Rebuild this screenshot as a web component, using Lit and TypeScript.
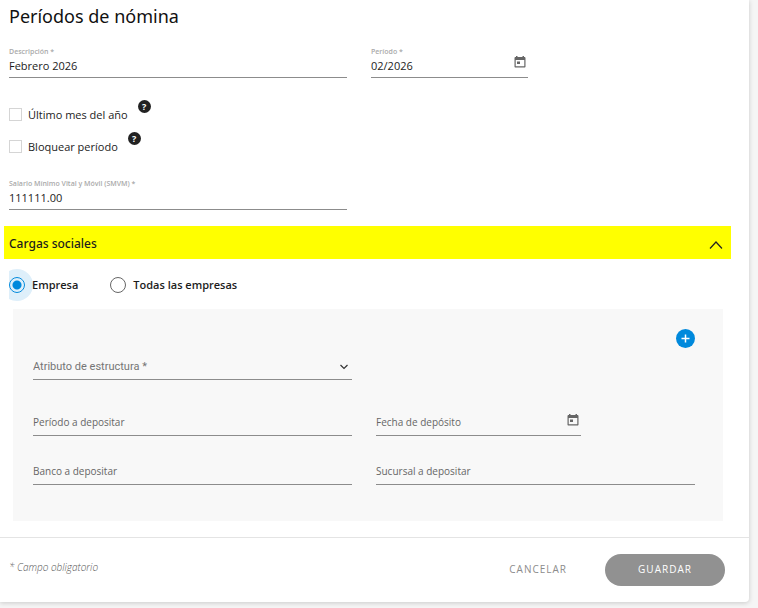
import { LitElement, html, css, svg } from "lit";
import { customElement, property, state } from "lit/decorators.js";

const calendarIcon = svg`<svg class="calendar" viewBox="0 0 12 12" width="12" height="12" aria-hidden="true">
  <path fill="#666" fill-rule="evenodd" d="M2 0h1.500v1h5V0H10v1h.5C11 1 11.500 1.500 11.500 2v8.500c0 .7-.4 1-1 1h-9c-.6 0-1-.3-1-1V2C.5 1.500 1 1 1.500 1H2zM1.700 4v6.300h8.600V4z"/>
  <rect x="3" y="5.500" width="3" height="2.500" fill="#666"/>
</svg>`;

const fieldStyles = css`
  * {
    box-sizing: border-box;
  }
  input,
  select,
  button {
    font: inherit;
    color: inherit;
    margin: 0;
    padding: 0;
    border: 0;
    background: none;
    outline: 0;
    border-radius: 0;
    min-width: 0;
  }
  .calendar {
    display: block;
  }
`;

@customElement("form-field")
export class FormField extends LitElement {
  @property() label = "";
  @property() value = "";
  @property({ type: Boolean }) date = false;

  static styles = [
    fieldStyles,
    css`
      :host {
        display: block;
        height: 32px;
        border-bottom: 1px solid #8c8c8c;
        font-size: 11px;
        color: #1c1c1c;
      }
      .box {
        display: flex;
        height: 100%;
      }
      .filled {
        flex: 1;
        min-width: 0;
        display: flex;
        flex-direction: column;
      }
      .filled span {
        font-size: 7px;
        font-weight: 600;
        line-height: 12px;
        color: #aaa;
      }
      .filled input {
        height: 15px;
        width: 100%;
      }
      .empty {
        flex: 1;
        min-width: 0;
        display: flex;
        align-items: center;
        gap: 4px;
        padding-top: 4px;
        font-size: 10px;
        color: #666;
        white-space: nowrap;
      }
      .empty input {
        flex: 1;
      }
      button {
        align-self: center;
        padding: 2px;
      }
    `,
  ];

  render() {
    return html`<div class="box">
      <label class=${this.value ? "filled" : "empty"}>
        <span>${this.label}</span><input type="text" .value=${this.value} />
      </label>
      ${this.date
        ? html`<button type="button" aria-label="Abrir calendario">${calendarIcon}</button>`
        : ""}
    </div>`;
  }
}

@customElement("app-root")
export class AppRoot extends LitElement {
  @state() private scope = "empresa";

  static styles = [
    fieldStyles,
    css`
      :host {
        display: block;
        min-height: 100vh;
        padding: 0 9px 6px 0;
        background: #f5f5f5;
        font-family: "Open Sans", "Noto Sans", sans-serif;
        font-size: 11px;
        color: #1c1c1c;
      }
      .card {
        background: #fff;
        border-radius: 0 0 4px 0;
        box-shadow: 0 1px 5px rgba(0, 0, 0, 0.18);
      }
      h1 {
        margin: 0;
        padding: 4px 9px 18px;
        font: 400 18px/24px "Noto Sans", sans-serif;
        color: #111;
      }
      .columns {
        display: grid;
        grid-template-columns: 1fr 1fr;
        column-gap: 24px;
      }
      .main {
        padding: 0 40px 0 9px;
      }
      .month {
        width: 157px;
      }
      .checks {
        padding: 20px 9px 16px;
      }
      .check {
        display: flex;
        align-items: center;
        height: 32px;
        gap: 10px;
      }
      .check label {
        display: flex;
        align-items: center;
        gap: 6px;
      }
      .check input {
        appearance: none;
        width: 13px;
        height: 13px;
        border: 1px solid #d5d5d5;
        background: #fff;
      }
      .check input:checked {
        background: #0089dc;
      }
      .help {
        width: 13px;
        height: 13px;
        margin-bottom: 15px;
        border-radius: 50%;
        background: #222;
        color: #fff;
        font-size: 9px;
        font-weight: 700;
        line-height: 13px;
        text-align: center;
      }
      .section {
        display: flex;
        align-items: center;
        justify-content: space-between;
        height: 33px;
        margin: 16px 18px 0 4px;
        padding: 2px 8px 0 5px;
        background: #ff0;
      }
      h2 {
        margin: 0;
        font: 500 12px/20px "Noto Sans", sans-serif;
      }
      .section svg,
      .select svg,
      .add svg {
        display: block;
      }
      .section button {
        padding-top: 2px;
      }
      .radios {
        display: flex;
        gap: 32px;
        height: 32px;
        margin: 10px 9px 8px;
        overflow: hidden;
        font-weight: 600;
      }
      .radios label {
        display: flex;
        align-items: center;
        gap: 7px;
      }
      .radios span {
        position: relative;
        padding-bottom: 2px;
      }
      .radios input {
        appearance: none;
        width: 16px;
        height: 16px;
        border: 1px solid #666;
        border-radius: 50%;
        background: #fff;
      }
      .radios input:checked {
        border-color: #0089dc;
        background: radial-gradient(circle, #0089dc 4px, #deeffa 5px);
        box-shadow: 0 0 0 8px #deeffa;
      }
      .panel {
        margin: 0 26px 0 13px;
        padding: 20px 28px 36px 20px;
        background: #f8f8f8;
      }
      .add {
        display: grid;
        place-items: center;
        width: 19px;
        height: 19px;
        margin-left: auto;
        border-radius: 50%;
        background: #0089dc;
      }
      .select {
        display: grid;
        align-items: center;
        height: 32px;
        border-bottom: 1px solid #8c8c8c;
        font-family: Roboto, sans-serif;
        font-size: 11px;
        color: #757575;
      }
      .select select {
        grid-area: 1 / 1;
        appearance: none;
        height: 20px;
        margin-top: 6px;
      }
      .select svg {
        grid-area: 1 / 1;
        justify-self: end;
        margin: 6px 4px 0 0;
        pointer-events: none;
      }
      .deposit {
        row-gap: 17px;
        margin-top: 24px;
      }
      .day {
        width: 205px;
      }
      footer {
        display: flex;
        align-items: center;
        height: 65px;
        margin-top: 16px;
        padding: 0 24px 0 9px;
        border-top: 1px solid #e4e4e4;
        font-size: 10px;
      }
      .note {
        flex: 1;
        margin: 0 0 6px;
        font-style: italic;
        font-weight: 300;
        color: #555;
      }
      footer button {
        height: 32px;
        padding-bottom: 2px;
        letter-spacing: 1px;
      }
      .cancel {
        margin-right: 38px;
        color: #8c8c8c;
      }
      .save {
        width: 120px;
        border-radius: 16px;
        background: #919191;
        color: #fff;
        font-weight: 500;
      }
    `,
  ];

  private radio(value: string, text: string) {
    return html`<label>
      <input
        type="radio"
        name="scope"
        .checked=${this.scope === value}
        @change=${() => (this.scope = value)}
      /><span>${text}</span>
    </label>`;
  }

  private check(text: string) {
    return html`<div class="check">
      <label><input type="checkbox" /><span>${text}</span></label>
      <button class="help" type="button" aria-label=${"Ayuda: " + text}>?</button>
    </div>`;
  }

  render() {
    return html`<form class="card" @submit=${(e: Event) => e.preventDefault()}>
      <h1>Períodos de nómina</h1>
      <div class="columns main">
        <form-field label="Descripción *" value="Febrero 2026"></form-field>
        <form-field class="month" label="Período *" value="02/2026" date></form-field>
      </div>
      <div class="checks">${this.check("Último mes del año")} ${this.check("Bloquear período")}</div>
      <div class="columns main">
        <form-field label="Salario Mínimo Vital y Móvil (SMVM) *" value="111111.00"></form-field>
      </div>

      <div class="section">
        <h2>Cargas sociales</h2>
        <button type="button" aria-label="Contraer Cargas sociales">
          <svg width="14" height="8" viewBox="0 0 14 8" fill="none" stroke="#222" stroke-width="1.200">
            <path d="M1 7.500 7 1l6 6.500" />
          </svg>
        </button>
      </div>

      <div class="radios" role="radiogroup" aria-label="Cargas sociales">
        ${this.radio("empresa", "Empresa")} ${this.radio("todas", "Todas las empresas")}
      </div>

      <div class="panel">
        <button class="add" type="button" aria-label="Agregar">
          <svg width="9" height="9" viewBox="0 0 9 9" stroke="#fff" stroke-width="1.500">
            <path d="M4.500 .5v8M.5 4.500h8" />
          </svg>
        </button>
        <div class="columns">
          <div class="select">
            <select aria-label="Atributo de estructura *">
              <option>Atributo de estructura *</option>
            </select>
            <svg width="8" height="6" viewBox="0 0 8 6" fill="none" stroke="#333" stroke-width="1.200">
              <path d="M.5 1 4 4.500 7.500 1" />
            </svg>
          </div>
        </div>
        <div class="columns deposit">
          <form-field label="Período a depositar"></form-field>
          <form-field class="day" label="Fecha de depósito" date></form-field>
          <form-field label="Banco a depositar"></form-field>
          <form-field label="Sucursal a depositar"></form-field>
        </div>
      </div>

      <footer>
        <p class="note">* Campo obligatorio</p>
        <button class="cancel" type="button">CANCELAR</button>
        <button class="save" type="submit">GUARDAR</button>
      </footer>
    </form>`;
  }
}
